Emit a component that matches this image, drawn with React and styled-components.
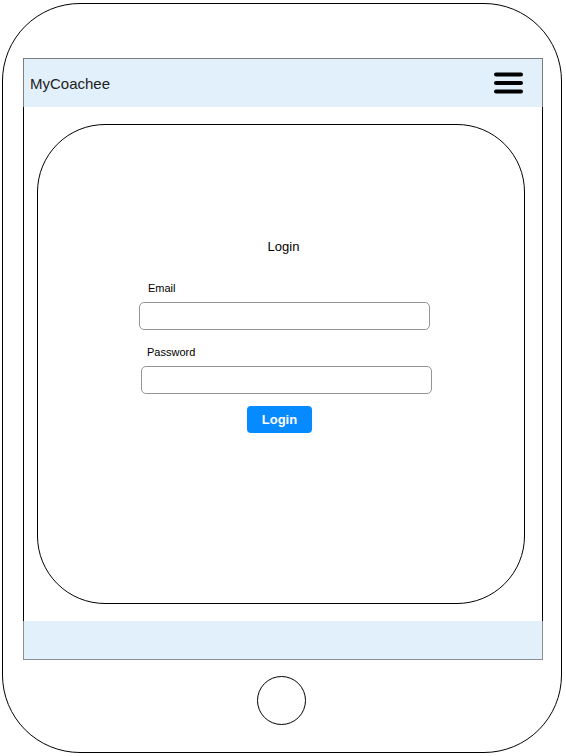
import React from "react";
import styled, { createGlobalStyle } from "styled-components";

const Global = createGlobalStyle`
  * { box-sizing: border-box; }
  html, body { margin: 0; padding: 0; background: #ffffff; }
  body { font-family: "Liberation Sans", Arial, sans-serif; }
`;

const Phone = styled.div`
  margin: 3px 0 0 2px;
  width: 560px;
  height: 750px;
  border: 1.3px solid #000;
  border-radius: 78px;
  padding-top: 54px;
  display: flex;
  flex-direction: column;
  align-items: flex-start;
`;

const Screen = styled.div`
  margin-left: 20px;
  width: 520px;
  display: flex;
  flex-direction: column;
`;

const Header = styled.header`
  height: 49px;
  background: #e1f0fb;
  border: 1px solid #7a7f85;
  border-bottom: none;
  display: flex;
  align-items: center;
  justify-content: space-between;
  padding: 0 19px 0 6px;
`;

const Brand = styled.span`
  font-size: 15px;
  color: #222;
  padding-top: 1px;
`;

const Body = styled.main`
  height: 514px;
  border-left: 1px solid #000;
  border-right: 1px solid #000;
  padding: 17px 0 0 13px;
`;

const Card = styled.section`
  width: 488px;
  height: 480px;
  border: 1.2px solid #000;
  border-radius: 68px;
  padding-top: 114px;
  display: flex;
  flex-direction: column;
`;

const Title = styled.h1`
  margin: 0;
  font-size: 13px;
  font-weight: normal;
  line-height: 16px;
  color: #000;
  text-align: center;
  padding-left: 5px;
`;

const Form = styled.form`
  margin: 27px 0 0 101px;
  width: 293px;
  display: flex;
  flex-direction: column;
`;

const Label = styled.label`
  font-size: 11px;
  line-height: 13px;
  color: #000;
  padding-left: ${(p) => p.$indent}px;
  margin-top: ${(p) => p.$top}px;
`;

const Input = styled.input`
  margin: 7px 0 0 ${(p) => p.$shift}px;
  width: 291px;
  height: 28px;
  border: 1.5px solid #959595;
  border-radius: 5px;
  background: #fff;
  outline: none;
  font-family: inherit;
`;

const Button = styled.button`
  margin: 12px 0 0 108px;
  align-self: flex-start;
  width: 65px;
  height: 27px;
  border: none;
  border-radius: 4px;
  background: #058bff;
  color: #fff;
  font-family: "Liberation Sans", Arial, sans-serif;
  font-weight: bold;
  font-size: 13px;
  padding: 0;
`;

const Footer = styled.footer`
  height: 39px;
  background: #e1f0fb;
  border: 1px solid #8a8f95;
  border-top: none;
`;

const HomeButton = styled.div`
  margin: 16px 0 0 254px;
  width: 49px;
  height: 49px;
  border: 1.2px solid #000;
  border-radius: 50%;
`;

const Menu = () => (
  <svg width="29" height="24" viewBox="0 0 29 24">
    <g stroke="#000" strokeWidth="4" strokeLinecap="round">
      <line x1="2" y1="3.5" x2="27" y2="3.5" />
      <line x1="2" y1="12" x2="27" y2="12" />
      <line x1="2" y1="20.5" x2="27" y2="20.5" />
    </g>
  </svg>
);

export default function App() {
  return (
    <>
      <Global />
      <Phone>
        <Screen>
          <Header>
            <Brand>MyCoachee</Brand>
            <Menu />
          </Header>
          <Body>
            <Card>
              <Title>Login</Title>
              <Form onSubmit={(e) => e.preventDefault()}>
                <Label $indent={9} $top={0}>Email</Label>
                <Input type="email" $shift={0} />
                <Label $indent={8} $top={16}>Password</Label>
                <Input type="password" $shift={2} />
                <Button type="submit">Login</Button>
              </Form>
            </Card>
          </Body>
          <Footer />
        </Screen>
        <HomeButton />
      </Phone>
    </>
  );
}
